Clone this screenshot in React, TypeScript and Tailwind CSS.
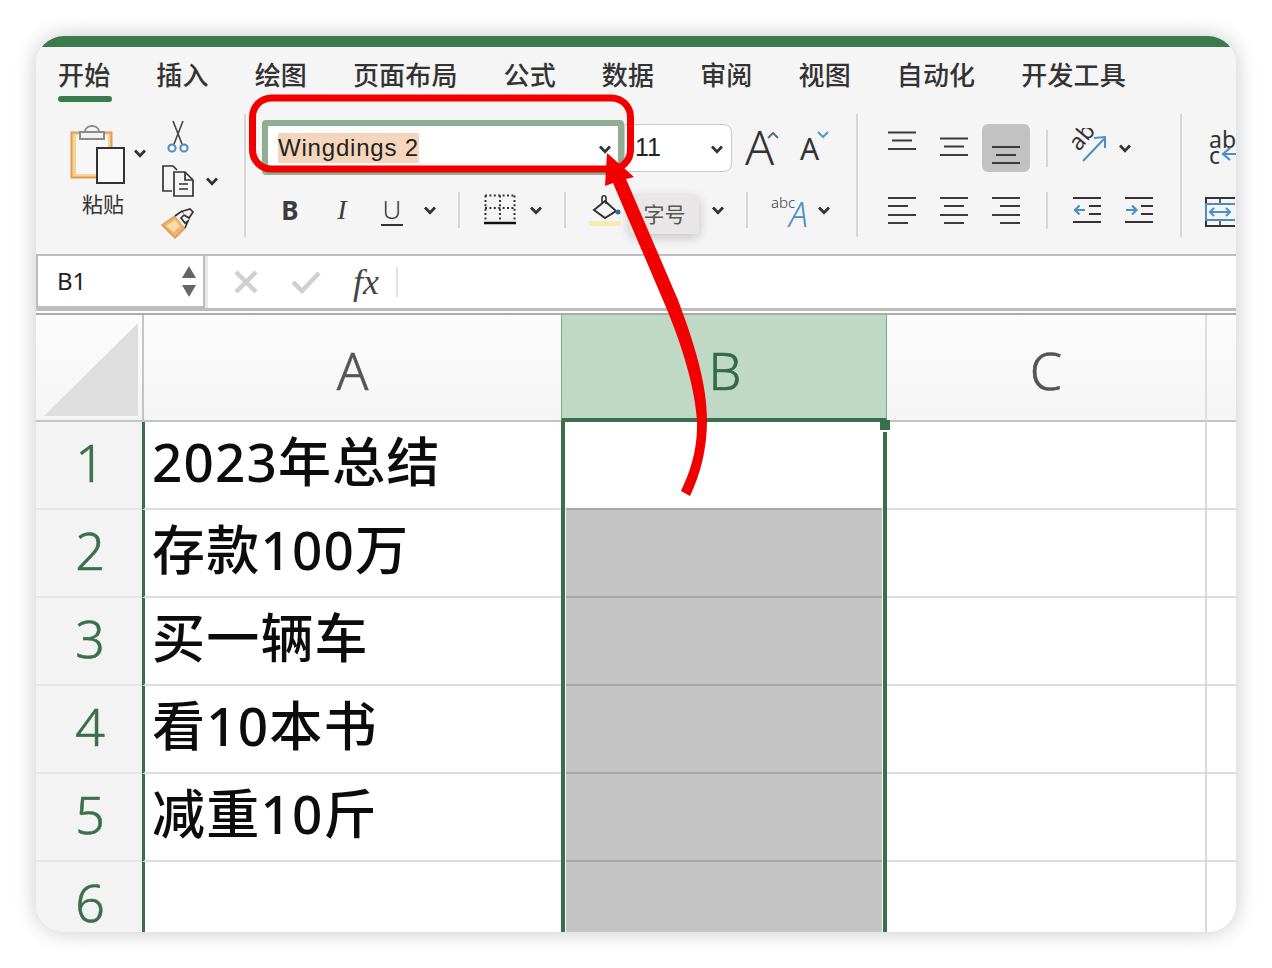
import React from "react";

const Chev = ({ className = "" }: { className?: string }) => (
  <svg width="12" height="9" viewBox="0 0 12 9" className={className} fill="none" stroke="#333" strokeWidth="2.8">
    <path d="M1 1.5 L6 6.8 L11 1.5" />
  </svg>
);

const Sep = ({ className = "" }: { className?: string }) => <div className={`w-[2px] bg-[#d6d6d6] shrink-0 ${className}`} />;

const Lines = ({ ys, spans }: { ys: number[]; spans: [number, number][] }) => (
  <svg width="28" height="48" viewBox="0 0 28 48" stroke="#3b3b3b" strokeWidth="2">
    {ys.map((y, i) => (
      <line key={i} x1={spans[i][0]} x2={spans[i][1]} y1={y} y2={y} />
    ))}
  </svg>
);

const tabs = ["开始", "插入", "绘图", "页面布局", "公式", "数据", "审阅", "视图", "自动化", "开发工具"];

const Clipboard = () => (
  <svg width="56" height="62" viewBox="0 0 56 62" fill="none">
    <rect x="1.5" y="9.5" width="40" height="45" fill="#f3d58c" stroke="#e59a54" strokeWidth="2" />
    <rect x="6" y="12" width="32" height="39" fill="#f7f7f7" />
    <path d="M10 9 H34 V16 H10 Z" fill="#f2f2f2" stroke="#8a8a8a" strokeWidth="2" />
    <path d="M15 9 C15 1 29 1 29 9" stroke="#8a8a8a" strokeWidth="2" />
    <rect x="27" y="25" width="27" height="35" fill="#f8f8f8" stroke="#333" strokeWidth="2" />
  </svg>
);

const Scissors = () => (
  <svg width="22" height="34" viewBox="0 0 22 34" fill="none">
    <path d="M6 1 L15 24 M16 1 L7 24" stroke="#444" strokeWidth="1.6" />
    <circle cx="5" cy="28" r="3.6" stroke="#4b8bbd" strokeWidth="2" />
    <circle cx="17" cy="28" r="3.6" stroke="#4b8bbd" strokeWidth="2" />
  </svg>
);

const CopyIcon = () => (
  <svg width="34" height="34" viewBox="0 0 34 34" fill="none" stroke="#333" strokeWidth="1.7">
    <path d="M11 27 H2 V2 H12 L16 6" />
    <path d="M13 8 H24 L32 16 V32 H13 Z" fill="#f5f5f5" />
    <path d="M24 8 V16 H32" />
    <path d="M18 20 H27 M18 25 H27" />
  </svg>
);

const Brush = () => (
  <svg width="34" height="32" viewBox="0 0 34 32" fill="none">
    <path d="M1 17 L14 8 L24 20 L14 30 Z" fill="#efb56a" stroke="#e0944f" strokeWidth="1.5" />
    <path d="M5 18 L14 12 L19 18 L13 24 Z" fill="#f5dca8" />
    <path d="M14 8 L21 3 L24 6 L20 10 L24 15 L27 13 L24 20" fill="#f5f5f5" stroke="#333" strokeWidth="1.7" />
    <path d="M22 3 L29 1 L32 4 L28 10 L23 7" fill="#f5f5f5" stroke="#333" strokeWidth="1.7" />
  </svg>
);

const BorderIcon = () => (
  <svg width="32" height="32" viewBox="0 0 32 32" fill="none">
    <path d="M1 1.5 H31 M1.5 1.5 V26 M30.5 1.5 V26 M16 1.5 V26 M1 14 H31" stroke="#333" strokeWidth="2" strokeDasharray="2 2.4" />
    <line x1="0" x2="32" y1="29" y2="29" stroke="#111" strokeWidth="2.4" />
  </svg>
);

const FillIcon = () => (
  <svg width="32" height="38" viewBox="0 0 32 38" fill="none">
    <path d="M5 19 L16 10 L27 20 L16 27 Z" fill="#f5f5f5" stroke="#333" strokeWidth="2" />
    <path d="M13 13 V7 C13 4 17 4 17 7 V13" stroke="#333" strokeWidth="1.6" />
    <circle cx="29" cy="21" r="2.5" fill="#2f6ea5" />
    <rect x="0" y="30" width="32" height="5" fill="#f6eeb0" />
  </svg>
);

const Orient = () => (
  <svg width="36" height="36" viewBox="0 0 36 36" fill="none">
    <text x="0" y="0" transform="translate(7 24) rotate(-50)" fontSize="23" fill="#333" fontFamily="Noto Sans">ab</text>
    <path d="M11 33 L32 11 M22 10 L33 9 L33 20" stroke="#4b8fc4" strokeWidth="2" />
  </svg>
);

const Indent = ({ flip }: { flip?: boolean }) => (
  <svg width="28" height="28" viewBox="0 0 28 28" fill="none" stroke="#333" strokeWidth="2">
    <path d="M0 2 H28 M16 10 H28 M16 18 H28 M0 26 H28" />
    {flip ? (
      <path d="M1 14 H11 M7 9.5 L11.5 14 L7 18.5" stroke="#4b8fc4" strokeWidth="2.2" />
    ) : (
      <path d="M12 14 H2 M6.5 9.5 L2 14 L6.5 18.5" stroke="#4b8fc4" strokeWidth="2.2" />
    )}
  </svg>
);

const Row = ({ n, text, gray, last }: { n: number; text: string; gray?: boolean; last?: boolean }) => (
  <div className="flex h-[88px] shrink-0">
    <div className="w-[106px] shrink-0 bg-[#f3f3f3] border-b-2 border-[#e6e6e6] flex items-center justify-center pl-[2px] pb-[6px] text-[52px] leading-none font-light [-webkit-text-stroke:0.6px] text-[#3a7049]">{n}</div>
    <div className="w-[419px] shrink-0 border-l-[3px] border-[#3a7049] bg-white border-b-2 border-b-[#dcdcdc] flex items-center pl-[7px] pb-[8px] text-[53px] tracking-[1.2px] leading-none font-medium text-[#0c0c0c] whitespace-nowrap">{text}</div>
    <div className="w-[326px] shrink-0 border-x-[4px] border-[#3a7049] px-[1px] bg-white">
      <div className={`h-full border-b-2 ${last ? "border-transparent" : "border-[#a8a8a8]"} ${gray ? "bg-[#c4c4c4]" : "bg-white"}`} />
    </div>
    <div className="w-[320px] shrink-0 bg-white border-b-2 border-[#dcdcdc] border-r-2 border-r-[#d8d8d8]" />
    <div className="flex-1 bg-white border-b-2 border-[#dcdcdc]" />
  </div>
);

export default function App() {
  return (
    <div className="relative w-[1272px] h-[968px] bg-white overflow-hidden font-['Noto_Sans','Noto_Sans_CJK_SC',sans-serif]">
      <div className="ml-[36px] mt-[36px] w-[1200px] h-[896px] rounded-[28px] overflow-hidden flex flex-col shadow-[0_0_22px_rgba(0,0,0,0.22)] bg-white relative">
        <div className="h-[11px] shrink-0 bg-[#3b7a4c]" />

        {/* tabs */}
        <div className="h-[56px] shrink-0 bg-[#f5f5f5] flex pl-[22px] gap-[46px] text-[#333]">
          {tabs.map((t, i) => (
            <div key={t} className="relative h-full pt-[9px] text-[26px] tracking-[0.15px] leading-[38px] font-medium whitespace-nowrap">
              {t}
              {i === 0 && <div className="absolute left-0 w-[54px] top-[49px] h-[6px] rounded-full bg-[#3b7a4c]" />}
            </div>
          ))}
        </div>

        {/* ribbon */}
        <div className="h-[151px] shrink-0 bg-[#f5f5f5] flex border-b-0">
          {/* clipboard */}
          <div className="w-[208px] shrink-0 flex pl-[34px] pt-[20px]">
            <div className="w-[56px] flex flex-col items-center">
              <Clipboard />
              <div className="text-[21px] leading-[28px] text-[#333] mt-[5px] ml-[10px] whitespace-nowrap">粘贴</div>
            </div>
            <Chev className="ml-[8px] mt-[26px]" />
            <div className="flex flex-col ml-[15px] -mt-[3px]">
              <div className="ml-[6px]"><Scissors /></div>
              <div className="flex items-center mt-[10px]">
                <CopyIcon />
                <Chev className="ml-[11px]" />
              </div>
              <div className="mt-[10px]"><Brush /></div>
            </div>
          </div>
          <Sep className="h-[123px] mt-[11px]" />

          {/* font */}
          <div className="w-[610px] shrink-0 relative pt-[17px]">
            <div className="flex items-start pl-[16px]">
              <div className="w-[362px] h-[55px] border-[6px] border-[#8fae92] rounded-[4px] bg-white flex items-center pl-[10px] pr-[6px]">
                <span className="bg-[#f5d6bc] h-[30px] leading-[30px] text-[24px] text-[#222] font-['Liberation_Sans'] tracking-[0.8px] whitespace-nowrap">Wingdings 2</span>
                <Chev className="ml-auto mr-[1px] mt-[4px]" />
              </div>
              <div className="w-[108px] h-[48px] mt-[4px] bg-white border border-[#c8c8c8] rounded-r-[8px] flex items-center pl-[10px] pr-[8px] text-[25px] text-[#222] font-['Liberation_Sans']">
                11
                <Chev className="ml-auto mt-[3px]" />
              </div>
              <div className="ml-[13px] mt-[2px] flex items-start text-[#333] text-[48px] leading-[50px] font-light relative w-[36px]">
                A
                <svg width="12" height="8" viewBox="0 0 12 8" fill="none" stroke="#5f6e78" strokeWidth="2" className="absolute left-[22px] top-[10px]"><path d="M1 6 L6 1 L11 6" /></svg>
              </div>
              <div className="ml-[19px] mt-[7px] relative text-[#333] text-[30px] leading-[44px] w-[28px]">
                A
                <svg width="12" height="8" viewBox="0 0 12 8" fill="none" stroke="#4b9ad0" strokeWidth="2" className="absolute left-[17px] top-[4px]"><path d="M1 1 L6 6 L11 1" /></svg>
              </div>
            </div>
            <div className="flex items-center mt-[11px] h-[48px] text-[#3c3c3c]">
              <div className="ml-[34px] w-[20px] text-center text-[26px] font-bold leading-none">B</div>
              <div className="ml-[32px] w-[20px] text-center text-[28px] leading-none italic font-['Liberation_Serif']">I</div>
              <div className="ml-[29px] w-[22px] text-center text-[26px] leading-[30px] border-b-2 border-[#333] font-light">U</div>
              <Chev className="ml-[21px]" />
              <Sep className="h-[36px] ml-[22px]" />
              <div className="ml-[24px]"><BorderIcon /></div>
              <Chev className="ml-[14px]" />
              <Sep className="h-[36px] ml-[22px]" />
              <div className="ml-[23px]"><FillIcon /></div>
              <div className="absolute left-[384px] top-[92px] w-[69px] h-[39px] rounded-[4px] bg-[#e8e6e6] shadow-[0_3px_12px_rgba(0,0,0,0.22)] flex items-center justify-center text-[21px] text-[#555]">字号</div>
              <Chev className="ml-[91px]" />
              <Sep className="h-[36px] ml-[22px]" />
              <div className="ml-[23px] relative w-[38px] h-[38px]">
                <span className="absolute left-0 top-[1px] text-[15px] leading-[20px] font-light">abc</span>
                <span className="absolute left-[18px] top-[6px] text-[34px] leading-[34px] italic text-[#4b8fc4] font-light">A</span>
              </div>
              <Chev className="ml-[9px]" />
            </div>
          </div>
          <Sep className="h-[123px] mt-[11px]" />

          {/* alignment */}
          <div className="w-[322px] shrink-0 pt-[21px] flex">
            <div className="ml-[20px] grid grid-cols-[48px_48px_48px] gap-x-[4px] gap-y-[14px] grid-rows-[48px_48px]">
              <div className="flex justify-center"><Lines ys={[8.5, 16.5, 25]} spans={[[0, 28], [4, 24], [0, 28]]} /></div>
              <div className="flex justify-center"><Lines ys={[14.5, 22.5, 31]} spans={[[0, 28], [4, 24], [0, 28]]} /></div>
              <div className="flex justify-center rounded-[6px] bg-[#c2c2c2]"><Lines ys={[23, 31, 39]} spans={[[0, 28], [4, 24], [0, 28]]} /></div>
              <div className="flex justify-center"><Lines ys={[12, 20, 29, 37]} spans={[[0, 28], [0, 20], [0, 28], [0, 20]]} /></div>
              <div className="flex justify-center"><Lines ys={[12, 20, 29, 37]} spans={[[0, 28], [4, 24], [0, 28], [4, 24]]} /></div>
              <div className="flex justify-center"><Lines ys={[12, 20, 29, 37]} spans={[[0, 28], [8, 28], [0, 28], [8, 28]]} /></div>
            </div>
            <div className="flex flex-col ml-[16px]">
              <div className="flex items-center h-[48px]">
                <Sep className="h-[37px]" />
                <div className="ml-[24px] -mt-[4px]"><Orient /></div>
                <Chev className="ml-[11px] mt-[1px]" />
              </div>
              <div className="flex items-center h-[48px] mt-[14px]">
                <Sep className="h-[37px]" />
                <div className="ml-[25px]"><Indent /></div>
                <div className="ml-[24px]"><Indent flip /></div>
              </div>
            </div>
          </div>
          <Sep className="h-[123px] mt-[11px]" />

          {/* wrap */}
          <div className="flex-1 min-w-0 overflow-hidden pt-[28px] pl-[27px]">
            <div className="relative h-[40px] w-[30px] text-[#333] text-[23px] leading-[16px]">
              <div>ab</div>
              <div>c</div>
              <svg width="18" height="16" viewBox="0 0 18 16" fill="none" stroke="#4b8fc4" strokeWidth="2.2" className="absolute left-[12px] top-[15px]"><path d="M18 8 H3 M9 2 L2 8 L9 14" /></svg>
            </div>
            <svg width="30" height="30" viewBox="0 0 30 30" fill="none" className="mt-[26px] -ml-[4px]">
              <rect x="1" y="1" width="30" height="28" stroke="#333" strokeWidth="2" />
              <line x1="15" y1="1" x2="15" y2="29" stroke="#333" strokeWidth="1.5" />
              <rect x="1" y="7" width="30" height="16" fill="#f5f5f5" stroke="#4b8fc4" strokeWidth="2" />
              <path d="M5 15 H25 M9 11 L5 15 L9 19 M21 11 L25 15 L21 19" stroke="#4b8fc4" strokeWidth="2" />
            </svg>
          </div>
        </div>

        {/* formula bar */}
        <div className="h-[57px] shrink-0 bg-white border-t-[2px] border-b-[3px] border-[#bdbdbd] flex">
          <div className="w-[169px] shrink-0 border-[2px] border-t-0 border-[#bdbdbd] flex items-center pl-[19px] pr-[7px] text-[24px] text-[#222]">
            B1
            <div className="ml-auto flex flex-col gap-[7px]">
              <svg width="14" height="12" viewBox="0 0 14 12"><path d="M7 0 L14 12 H0 Z" fill="#666" /></svg>
              <svg width="14" height="12" viewBox="0 0 14 12"><path d="M0 0 H14 L7 12 Z" fill="#666" /></svg>
            </div>
          </div>
          <div className="w-[3px] shrink-0 bg-[#e8e8e8]" />
          <div className="flex items-center flex-1">
            <svg width="24" height="24" viewBox="0 0 24 24" stroke="#d0d0d0" strokeWidth="4.5" className="ml-[26px]"><path d="M2 2 L22 22 M22 2 L2 22" /></svg>
            <svg width="30" height="24" viewBox="0 0 30 24" fill="none" stroke="#d0d0d0" strokeWidth="4.5" className="ml-[33px]"><path d="M2 12 L11 21 L28 3" /></svg>
            <div className="ml-[32px] w-[32px] text-[36px] leading-none italic font-['Liberation_Serif'] text-[#444] whitespace-nowrap">fx</div>
            <Sep className="h-[30px] ml-[11px] bg-[#e2e2e2]" />
          </div>
        </div>

        <div className="h-[2px] shrink-0 bg-white" />
        <div className="h-[2px] shrink-0 bg-[#aaaaaa]" />

        {/* column header */}
        <div className="h-[107px] shrink-0 flex text-[52px] leading-none font-light [-webkit-text-stroke:0.6px] text-[#555] bg-gradient-to-b from-[#fcfcfc] to-[#f5f5f5]">
          <div className="w-[108px] shrink-0 border-r-2 border-b-2 border-[#c4c4c4] pl-[8px] pt-[8px]">
            <svg width="94" height="93" viewBox="0 0 94 93"><path d="M0 93 L94 0 V93 Z" fill="#dedede" /></svg>
          </div>
          <div className="w-[417px] shrink-0 border-b-2 border-[#c4c4c4] flex items-center justify-center pt-[4px]">A</div>
          <div className="w-[326px] shrink-0 border-x border-[#6fb674] border-b-[4px] border-b-[#3a7049] bg-[#bfd9c6] text-[#336b47] flex items-center justify-center pt-[6px] pl-[2px]">B</div>
          <div className="w-[320px] shrink-0 border-b-2 border-[#c4c4c4] border-r-2 border-r-[#dedede] flex items-center justify-center pt-[4px]">C</div>
          <div className="flex-1 border-b-2 border-[#c4c4c4]" />
        </div>

        {/* rows */}
        <div className="flex flex-col flex-1 min-h-0 overflow-hidden">
          <Row n={1} text="2023年总结" />
          <Row n={2} text="存款100万" gray />
          <Row n={3} text="买一辆车" gray />
          <Row n={4} text="看10本书" gray />
          <Row n={5} text="减重10斤" gray />
          <Row n={6} text="" gray last />
        </div>

        <div className="absolute left-[844px] top-[384px] w-[10px] h-[10px] bg-[#3a7049] border-b-[2px] border-white box-content" />
      </div>

      {/* red annotation */}
      <svg width="1272" height="968" viewBox="0 0 1272 968" fill="none" className="absolute left-0 top-0 pointer-events-none">
        <rect x="252.5" y="98" width="378" height="71" rx="19" stroke="#f20000" strokeWidth="7" />
        <path d="M681 491 C690 472 698 450 697 420 C694 380 678 335 663 300 L613 183 L605 186 L607 153 L634 177 L626 179 L678 300 C695 345 707 385 707 420 C707 450 700 475 690 496 Z" fill="#f20000" />
      </svg>
    </div>
  );
}
